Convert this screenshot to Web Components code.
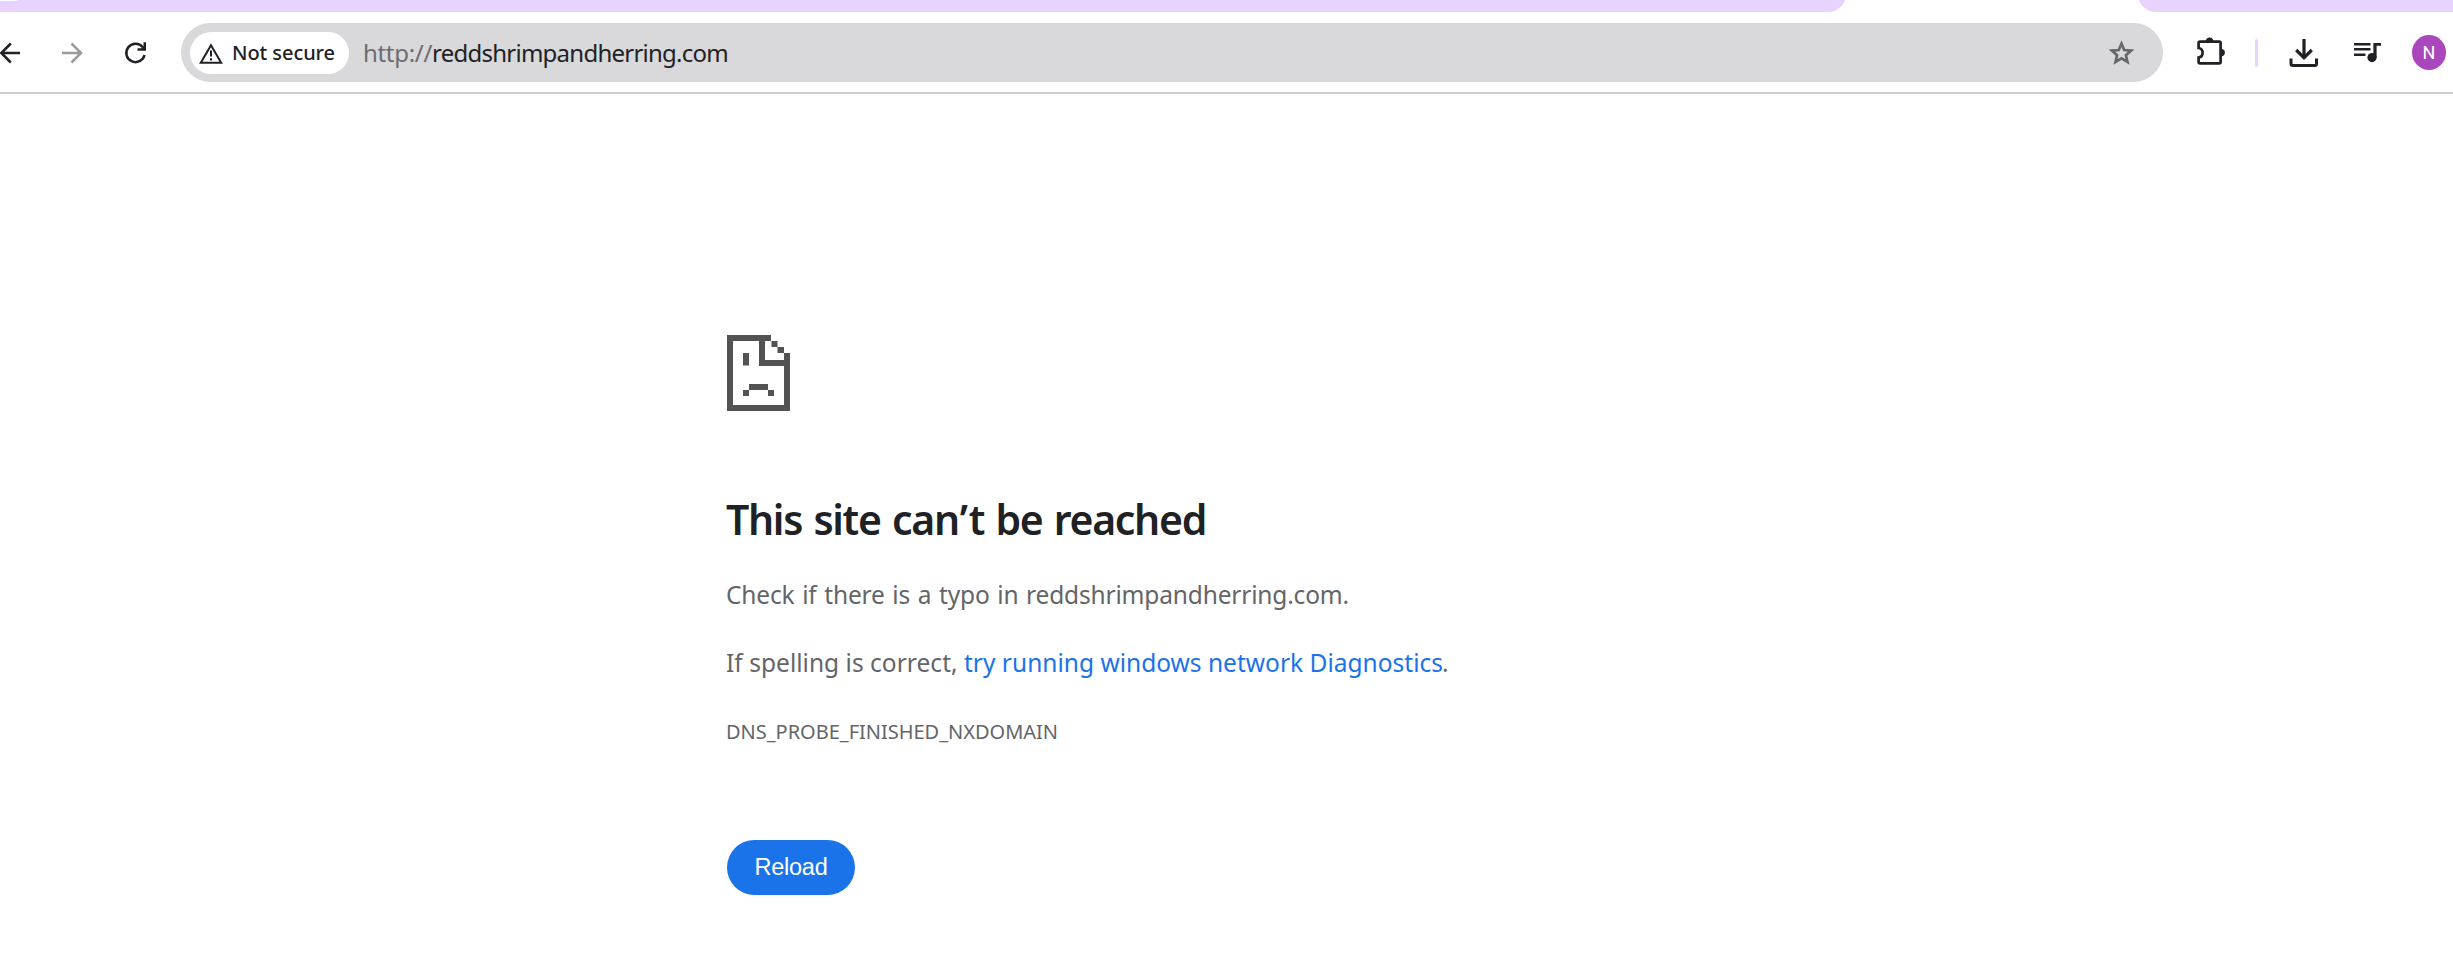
<!DOCTYPE html>
<html lang="en">
<head>
<meta charset="utf-8">
<title>reddshrimpandherring.com</title>
<style>
html,body{margin:0;height:100%;background:#fff;overflow:hidden}
body{font-family:"Noto Sans","Open Sans",sans-serif;color:#202124}
</style>
</head>
<body>
<browser-window></browser-window>
<script>
const define = (name, html) => customElements.define(name, class extends HTMLElement {
  constructor() { super(); this.attachShadow({mode: 'open'}).innerHTML = html; }
});

// One line of text whose letter spacing is adjusted to fill its "width" attribute.
customElements.define('fit-line', class extends HTMLElement {
  constructor() {
    super();
    this.attachShadow({mode: 'open'}).innerHTML =
      '<style>:host{display:block;white-space:pre}span{display:inline-block}</style><span><slot></slot></span>';
  }
  connectedCallback() {
    const s = this.shadowRoot.querySelector('span'), w = +this.getAttribute('width');
    const fit = () => {
      s.style.letterSpacing = '0';
      const gap = (w - s.getBoundingClientRect().width) / this.textContent.length;
      s.style.letterSpacing = gap + 'px';
      this.style.width = w + 'px';
    };
    fit();
  }
});

define('tab-strip', `<style>
:host{display:flex;justify-content:space-between;height:12px;background:#fff;overflow:hidden}
div{background:#e8d3ff;height:20px;margin-top:-8px;box-sizing:border-box;padding-top:8px}
.l{width:1846px;border-bottom-right-radius:18px}
.r{width:315px;border-bottom-left-radius:18px}
.l i{display:block;width:18px;height:1px;background:#fff;border-bottom-right-radius:8px 1px}
</style><div class="l"><i></i></div><div class="r"></div>`);

define('site-chip', `<style>
:host{display:flex;align-items:center;box-sizing:border-box;width:159px;height:42px;padding-left:8px;border-radius:21px;background:#fff;font-size:20px;font-weight:500;line-height:42px}
svg{display:block;margin-right:8px}
</style><svg width="26" height="24" viewBox="0 0 26 24"><path d="M13 4.2 23.2 21.8H2.8Z" fill="none" stroke="#202124" stroke-width="2"/><path d="M13 9.5v6M13 17.2v2.2" stroke="#202124" stroke-width="2"/></svg><fit-line width="103">Not secure</fit-line>`);

define('address-bar', `<style>
:host{display:flex;align-items:center;box-sizing:border-box;width:1982px;height:59px;padding:0 27px 0 9px;border-radius:30px;background:#d9d9db;font-size:24px;line-height:59px}
.s{margin-left:14px;color:#6b6c70}
svg{margin-left:auto;display:block}
</style><site-chip></site-chip><fit-line class="s" width="69">http://</fit-line><fit-line width="296">reddshrimpandherring.com</fit-line>
<svg width="30" height="30" viewBox="0 0 30 30"><path d="M15 5.8 17.7 12.2 24.6 12.8 19.4 17.4 21 24.1 15 20.5 9 24.1 10.6 17.4 5.4 12.8 12.3 12.2Z" transform="translate(.5 -.2)" fill="none" stroke="#66676b" stroke-width="2.7"/></svg>`);

define('tool-bar', `<style>
:host{display:flex;align-items:center;box-sizing:border-box;height:82px;padding-top:1px;border-bottom:2px solid #ccc;background:#fff}
svg{display:block;flex:none}
.rl{margin:0 33px 0 38px}.fw{margin-left:38px}
.px{margin:0 0 2px 32px}.bar{width:3px;height:28px;margin:0 31px 0 28px;border-radius:2px;background:#e8d3ff}
.mu{margin-left:34px}
.av{width:34px;height:35px;margin-left:29px;border-radius:50%;background:#ab47bc;color:#fff;font:18px/35px Roboto,sans-serif;text-align:center}
</style>
<svg width="22" height="24" viewBox="0 0 22 24"><path d="M20 12H1.5M10.8 2.5 1.3 12l9.5 9.5" fill="none" stroke="#202124" stroke-width="2.5"/></svg>
<svg class="fw" width="26" height="24" viewBox="0 0 26 24"><path d="M2 12h19.5M11.5 2.5 21 12l-9.500 9.500" fill="none" stroke="#9b9b9d" stroke-width="2.5"/></svg>
<svg class="rl" width="24" height="24" viewBox="0 0 24 24"><path d="M20.5 14A9.2 9.2 0 1 1 18.8 6.3" fill="none" stroke="#202124" stroke-width="2.5"/><path d="M22 1.3V9.8H13.5V7.3H17.3L19.5 5.2V1.3Z" fill="#202124"/></svg>
<address-bar></address-bar>
<svg class="px" width="32" height="32" viewBox="0 0 32 32"><path d="M5 5.6H24.2Q25.6 5.6 25.6 7V26Q25.6 27.4 24.2 27.4H5Q3.6 27.4 3.6 26V21.5Q7.6 20.8 7.6 16.7T3.6 12V7Q3.6 5.6 5 5.6Z" fill="none" stroke="#202124" stroke-width="2.7"/><path d="M11 5a3.6 3.6 0 0 1 7.2 0ZM26.3 13a3.6 3.6 0 0 1 0 7.2Z" fill="#202124"/></svg>
<div class="bar"></div>
<svg width="30" height="30" viewBox="0 0 30 30"><path d="M15 1V19M7.2 12 15 19.800 22.800 12" fill="none" stroke="#202124" stroke-width="3.2"/><path d="M2 20.5V25.8Q2 27.6 3.8 27.6H25.7Q27.5 27.6 27.5 25.8V20.5" fill="none" stroke="#202124" stroke-width="3"/></svg>
<svg class="mu" width="30" height="24" viewBox="0 0 30 24"><path d="M1 3.2H17.5M1 8.3H17.5M1 13.7H12.5" stroke="#202124" stroke-width="2.4"/><circle cx="19" cy="16.6" r="4.6" fill="#202124"/><path d="M20.4 2H28V4.8H23.6V17H20.4Z" fill="#202124"/></svg>
<div class="av">N</div>`);

define('sad-page', `<style>:host{display:block}svg{display:block}</style>
<svg width="63" height="76" viewBox="0 0 63 76" fill="#535353"><path d="M0 0H44V6H38V25H57V18H63V76H0ZM6 6V70H57V31H32V6Z" fill-rule="evenodd"/><path d="M44.500 6h6v6h-6zM50.500 12h6.500v6h-6.500zM16 18h6v12.500h-6zM22 49h19v6H22zM16 55h6v6h-6zM41 55h6v6h-6z"/></svg>`);

define('reload-button', `<style>
:host{display:block;width:128px}
button{display:flex;justify-content:center;width:128px;height:55px;padding:0;border:0;border-radius:28px;background:#1a73e8;color:#fff;font:23.500px/54px "Liberation Sans",Arial,sans-serif}
</style><button><fit-line width="73">Reload</fit-line></button>`);

define('error-page', `<style>
:host{display:block;padding:241px 0 0 727px;color:#646569;font-size:24.500px;line-height:36px}
fit-line{margin-left:-1px}
.h{margin-top:80px;font-size:41px;line-height:56px;font-weight:600;word-spacing:2px;color:#202124}
.h b{font-weight:inherit;margin:0 2px 0 1px}
.a{margin-top:30px;word-spacing:1.500px}.b{display:flex;margin-top:32px}.k{color:#1a73e8;margin-left:0}
.c{margin-top:33px;font-size:20px}
reload-button{margin-top:90px}
</style>
<sad-page></sad-page>
<fit-line class="h" width="480">This site can<b>’</b>t be reached</fit-line>
<fit-line class="a" width="623">Check if there is a typo in reddshrimpandherring.com.</fit-line>
<div class="b"><fit-line width="238">If spelling is correct, </fit-line><fit-line class="k" width="479">try running windows network Diagnostics</fit-line><fit-line width="6">.</fit-line></div>
<fit-line class="c" width="332">DNS_PROBE_FINISHED_NXDOMAIN</fit-line>
<reload-button></reload-button>`);

define('browser-window', `<style>:host{display:block;width:2453px;height:980px;overflow:hidden;background:#fff}</style>
<tab-strip></tab-strip><tool-bar></tool-bar><error-page></error-page>`);
</script>
</body>
</html>
